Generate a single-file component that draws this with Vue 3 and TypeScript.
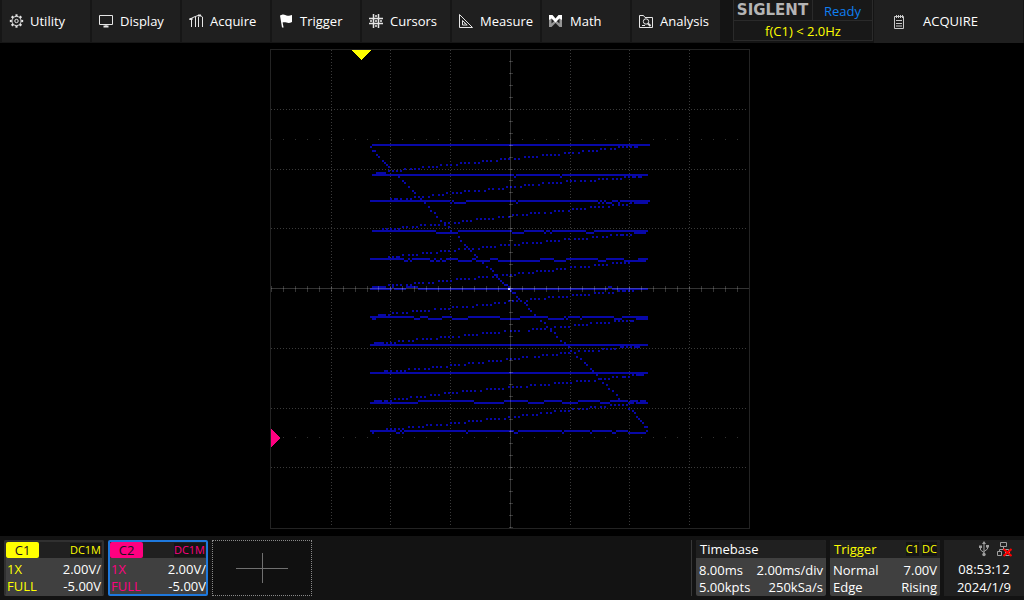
<script setup lang="ts">
interface MenuItem {
  label: string
  icon: string
}
interface Channel {
  name: string
  coupling: string
  probe: string
  bandwidth: string
  scale: string
  offset: string
  tone: string
  active: boolean
}

const menu: MenuItem[] = [
  { label: 'Utility', icon: 'gear' },
  { label: 'Display', icon: 'display' },
  { label: 'Acquire', icon: 'acquire' },
  { label: 'Trigger', icon: 'flag' },
  { label: 'Cursors', icon: 'cursors' },
  { label: 'Measure', icon: 'measure' },
  { label: 'Math', icon: 'math' },
  { label: 'Analysis', icon: 'analysis' },
]

const channels: Channel[] = [
  { name: 'C1', coupling: 'DC1M', probe: '1X', bandwidth: 'FULL', scale: '2.00V/', offset: '-5.00V', tone: 'yellow', active: false },
  { name: 'C2', coupling: 'DC1M', probe: '1X', bandwidth: 'FULL', scale: '2.00V/', offset: '-5.00V', tone: 'pink', active: true },
]

// Graticule: 8 divisions of 5 ticks each way
const tickIndex = Array.from({ length: 40 }, (_, i) => i)
const tickX = tickIndex.map((i) => Math.round(i * 11.95 + 0.9))
const tickY = tickIndex.map((i) => Math.round((i + 1) * 11.95))
const gridX = [5, 10, 15, 25, 30, 35].map((i) => tickX[i])
const gridY = [4, 9, 14, 24, 29, 34].map((i) => tickY[i])

// XY trace samples: one entry per raster row, each listing lit columns or column ranges
const rows: string[] = [
  '1-139', '0 124 126 128 130 132-133', '115 117 120 122', '1-2 106 109 111 113', '97 99 101 104',
  '3 86 88 90 92 94', '4 77 79 81 83', '65 67 69 72 74', '6 56 58 60 63', '7 45 47 49 52 54',
  '8 35 38 40 43', '9 26 29 31 33', '17 20 22 24', '9 11 13 15', '3-7',
  '1-71 73-94 96-138', '14 72 95 127 129 131-132 134-135', '114 116 118 121 123 125', '16 98 100 102 105 107 110 112', '17 86 89 91 93 95',
  '77 79 81 84', '19 68 70 72 75', '59 61 64 66', '21 47 49 52 54 57', '22 38 41 43 45',
  '31 34 36', '22 24 26 29', '10 12-13 15 18 20 25', '0-39 41 48-72 74-113 115 117 121-123 125-139', '27 40 42-47 73 114 116 118-120 124 130 132-138',
  '121 124 126 128', '29 110 112 114 116 119', '101 103 105 107', '30 92 94 96 99', '32 80 82 84 87 90',
  '71 73 76 78', '33 64 66 69', '53 55 57 59 61', '35 46 48 50', '37 39 42 44',
  '25 27 30 32 34 37', '16 18 21 23 39', '6 8 10 12 14', '1-32 40 44-70 77-86 88-89 91-107 112-138', '33-43 71-76 87 90 108-111 132-137',
  '120 123 125-126 128 130', '44 111 113 116 118', '97 99 102 104 106 108', '45 88 90 92 94', '76 78 81 83 85',
  '47 65 67 69 72 74', '48 56 58 60 62', '44 47 49 51 54', '35 37 39 42 50', '26 28 30 33',
  '16 19 21 23 52', '9 11 13-14 53', '0-16 19 21-29 32 35 38-43 51-52 60-63 85-91 98-113 118-126 134-138', '17-18 20 30-31 33-34 36-37 44-50 53-59 64-84 92-97 114-117 127-137', '56 121 123 125 127 129',
  '112 114 116 118', '58 100 102 105 107 109', '60 93 95 97', '61 83 85 87 89 91', '74 76 79 81',
  '62-63 66 68 70 72', '54 56 58 61 63', '43 45 47 49 52 64', '34 36 38 40 65', '22 24 26 29 31 66',
  '9 11 13 15 18 20 67-68', '1-7 11 18-23 69 119-120', '0-10 12-17 24-118 121-138', '70 124 126-127 129 131', '71-72 112 114 116 119 121',
  '101 103 105 107 109', '73 89 91 94 96 98', '74 80 82 84 87', '69 71 73 75 78', '67 77 62 64',
  '78 53 56 58 60', '41 43 46 48 51', '79 32 35 37 39', '80 21 23 25 27 29', '11 13 16 18',
  '82 4-7 9', '0-21 25-28 36-40 49-64 75-88 97 99-104 106-121 126-138', '1-2 22-24 29-35 41-48 65-74 89-96 98 105 122-125 133-138', '85 122 124 126 128 130-131', '87 110 113 115 117 119',
  '102 104 106 108', '88 92 95 97 99', '81 83 85 87 90', '67 70 72 74 79 90', '92 56 58 60 62 64',
  '47 49 51 53', '93 35 37 39 41 44', '23 26 28 30 33', '95 14 16 19 21', '97 2-6 8 10 12',
  '0-138', '99 125-126 128 130 132-134', '116 118 120 122', '100 104 107 109 111 114', '95 97 99 102',
  '86 88 91 93', '103 76 78 82 84', '105 68 70 72 74', '59 61 63 65', '107 49 51 54 56',
  '108 40 42 44 47', '31 33 35 38', '110 19 22 24 27 29', '111 7-8 10 13 15 17', '0-138',
  '113 131 133-136', '121 123 126-127 129', '114-115 117 119', '103 105 107 109 112', '116 92 94 96 98 100',
  '118 80 82 85 87 89', '69 71 73 75 78', '119 58 60 62 64 66', '121 46 48 50 52 55', '37 39 41 43',
  '123 30 32 34', '20 23 25 27', '124 12 14 16 18', '2-5 7-8 10 24-51 67-78 87-95 104-114 120-128 130-133 135-137', '0-23 52-66 79-86 96-103 115-119 129-131 133-138',
  '120 122 124 126 128', '110 112 115 117', '101 104 106 108 129', '92 95 97 99 131', '85 88 90 132',
  '76 78 81 83', '69 72 74 133', '58 60 62 64 67 134', '49 51 53 55 135', '40 42 44 47 136',
  '28 30 33 35 38', '19 21 24 26 137-138', '8 10 12 14 16', '0-12 15 17-47 49-71 74-95 97-109 111-120 123-128 138', '1 13-14 16 48 72-73 96 110 121-122 129-137',
]

const tracePath = rows
  .map((row, y) =>
    row
      .split(' ')
      .map((span) => {
        const [from, to = from] = span.split('-').map(Number)
        const width = to - from + 1
        return `M${from} ${y}h${width}v1h-${width}z`
      })
      .join(''),
  )
  .join('')
</script>

<template>
  <div class="scope">
    <header class="topbar">
      <nav class="menu" aria-label="Main menu">
        <button v-for="item in menu" :key="item.label" type="button" class="menu-item">
          <svg class="icon" viewBox="0 0 16 16" aria-hidden="true">
            <g v-if="item.icon === 'gear'" class="line">
              <circle cx="7.500" cy="8" r="4.600" />
              <circle class="teeth" cx="7.500" cy="8" r="5.700" pathLength="80" />
              <circle cx="7.500" cy="8" r="1.700" />
            </g>
            <g v-else-if="item.icon === 'display'" class="line">
              <path d="M.5 2.500h13v9H.5zM7 11.500v2" />
              <path d="M4.500 13.500h5" class="thick" />
            </g>
            <g v-else-if="item.icon === 'acquire'" class="line">
              <path d="M.5 6.500 2 5.500 5 4l4-1.500h3l1.500 2M2.500 6v8M6.500 4v10M9.500 4v10M13.500 4v10" />
              <path d="M.5 6h3M9 2.500h3" class="thick" />
            </g>
            <path v-else-if="item.icon === 'flag'" class="solid" d="M1 2.500 3 1.800c2.500-.8 3.500 1.200 6 1 1.500-.1 2.500-.6 4-.9V9c-2 1-3.500 1.200-5.500.6C6 9.200 5 9 3.600 9.500l1 5H3z" />
            <path v-else-if="item.icon === 'cursors'" class="line cross" d="M4.500 1v14M9.500 1v14M0 5.500h14M0 10.500h14M7 2v2M7 12v2M1 8h2M11 8h2M6 8h2" />
            <g v-else-if="item.icon === 'measure'" class="line">
              <path d="M.5 1.500v13h13z" />
              <path d="M3.500 7.500V12h4.700zM5.500 10.500h1" />
            </g>
            <g v-else-if="item.icon === 'math'">
              <path class="dim" d="M0 6.500 2.500 5v5.500l4-3.500 4 3.500V5L13 6.500V14h-2.500l-4-4-4 4H0z" />
              <path class="solid" d="M0 2h3.500l3 3.500 3-3.500H13v5l-2.500-1.500-4 4-4-4L0 7z" />
            </g>
            <g v-else class="line">
              <path d="M.5 14.500v-12h4l1.500 2h7.500v10z" />
              <circle cx="7" cy="8.500" r="2.700" />
              <path d="M3 12.500h3" />
              <path d="M9 10.500l2.500 2.500" class="thick" />
            </g>
          </svg>
          <span>{{ item.label }}</span>
        </button>
      </nav>
      <section class="status">
        <strong class="brand">SIGLENT</strong>
        <span class="state">Ready</span>
        <span class="counter">f(C1) &lt; 2.0Hz</span>
      </section>
      <button type="button" class="panel-title">
        <svg class="icon" viewBox="0 0 16 16" aria-hidden="true">
          <path class="line light" d="M3.500 2.500h9v12h-9zM5 6.500h6M5 9.500h6M5 12h6" />
          <path class="line light" d="M5.500 1v3M7.500 1v3M9.500 1v3M11.500 1v3" />
        </svg>
        <span>ACQUIRE</span>
      </button>
    </header>

    <main class="display">
      <svg class="plot" viewBox="0 0 480 480" role="img" aria-label="XY waveform display">
        <path class="frame" d="M.5.5h479v479H.5z" />
        <path v-for="x in gridX" :key="'gx' + x" class="grid" :d="`M${x + 0.5} 1v477`" />
        <path v-for="y in gridY" :key="'gy' + y" class="grid" :d="`M1 ${y + 0.5}h476`" />
        <template v-for="x in tickX" :key="'h' + x">
          <rect class="dot" :x="x" y="90" width="1" height="1" />
          <rect class="dot" :x="x" y="388" width="1" height="1" />
        </template>
        <path class="trace" :d="tracePath" transform="translate(100 95) scale(2)" />
        <g class="axis">
          <rect x="240" y="1" width="1" height="478" />
          <rect x="1" y="239" width="478" height="1" />
          <rect v-for="x in tickX" :key="'ax' + x" :x="x" y="237" width="1" height="6" />
          <rect v-for="y in tickY" :key="'ay' + y" x="239" :y="y" width="4" height="1" />
        </g>
        <rect class="spot" x="238" y="239" width="2" height="2" />
        <path class="trigger-mark" d="M81 1h20L91 11z" />
        <path class="level-mark" d="M1 380v18l9-9z" />
      </svg>
    </main>

    <footer class="bottombar">
      <section v-for="ch in channels" :key="ch.name" class="card channel" :class="[ch.tone, { active: ch.active }]">
        <header class="card-head">
          <button type="button" class="tag">{{ ch.name }}</button>
          <span class="chip">{{ ch.coupling }}</span>
        </header>
        <div class="card-row"><span class="tinted">{{ ch.probe }}</span><span>{{ ch.scale }}</span></div>
        <div class="card-row"><span class="tinted">{{ ch.bandwidth }}</span><span>{{ ch.offset }}</span></div>
      </section>
      <button type="button" class="add" aria-label="Add channel">
        <svg viewBox="0 0 52 30" aria-hidden="true"><path d="M0 15.500h52M26.500 0v30" /></svg>
      </button>
      <div class="info">
        <section class="card timebase">
          <header class="card-head"><span>Timebase</span></header>
          <div class="card-row"><span>8.00ms</span><span>2.00ms/div</span></div>
          <div class="card-row"><span>5.00kpts</span><span>250kSa/s</span></div>
        </section>
        <section class="card trigger yellow">
          <header class="card-head">
            <span class="tinted">Trigger</span>
            <span class="chips"><span class="chip">C1</span><span class="chip">DC</span></span>
          </header>
          <div class="card-row"><span>Normal</span><span>7.00V</span></div>
          <div class="card-row"><span>Edge</span><span>Rising</span></div>
        </section>
        <section class="clock">
          <div class="links">
            <svg class="usb" viewBox="0 0 12 16" aria-hidden="true">
              <path class="line grey" d="M6 2v11M2.500 6v3L6 11.500M9.500 5v3L6 10.500" />
              <path class="fill-grey" d="M6 0l2 3H4zM1 4.500h3v2.500H1zM8 4h3v2.500H8z" />
              <circle class="fill-grey" cx="6" cy="13.500" r="1.700" />
            </svg>
            <svg class="lan" viewBox="0 0 16 16" aria-hidden="true">
              <path class="line grey" d="M4.500 1.500h6v4h-6zM7.500 5.500v3M3.500 10.500v-2h9v2M1.500 10.500h4v4h-4zM9.500 10.500h4v4h-4z" />
              <path class="cross-red" d="M7.500 8l8 7M15.500 8l-8 7" />
            </svg>
          </div>
          <time>08:53:12</time>
          <time>2024/1/9</time>
        </section>
      </div>
    </footer>
  </div>
</template>

<style>
body {
  margin: 0;
  background: #000;
}
</style>

<style scoped>
.scope {
  display: flex;
  flex-direction: column;
  min-height: 100vh;
  background: #000;
  color: #fff;
  font: 13px/17px "Open Sans", "Noto Sans", sans-serif;
}
button {
  margin: 0;
  padding: 0;
  border: 0;
  background: none;
  color: inherit;
  font: inherit;
}
.topbar {
  display: flex;
  height: 43px;
  background: #141414;
}
.menu {
  display: flex;
  flex: 1;
}
.menu-item {
  display: flex;
  flex: 1;
  align-items: center;
  gap: 5px;
  padding-left: 7px;
  border-left: 2px solid #161616;
  border-bottom: 1px solid #161616;
  background: #1f1f1f;
}
.icon {
  flex: none;
  width: 16px;
  height: 16px;
}
.line {
  fill: none;
  stroke: #e6e6e6;
  stroke-width: 1;
}
.teeth {
  stroke-width: 2;
  stroke-dasharray: 5 5;
  stroke-dashoffset: 2.5;
}
.thick {
  stroke-width: 2;
}
.cross {
  stroke-width: 1.5;
}
.line.grey {
  stroke: #a0a0a0;
}
.line.light {
  stroke: #c8c8c8;
}
.solid {
  fill: #fff;
}
.dim {
  fill: #969696;
}
.status {
  display: grid;
  grid-template-columns: 79px 59px;
  grid-template-rows: 20px 20px;
  margin: 0 1px 2px 13px;
  border: 1px solid #2a2a2a;
  border-top: 0;
  background: #181818;
  text-align: center;
}
.brand {
  padding-right: 1px;
  border-right: 1px solid #2a2a2a;
  color: #b4b4b4;
  font: bold 15px/20px "DejaVu Sans", sans-serif;
}
.state {
  color: #0f7ff0;
  line-height: 23px;
}
.counter {
  grid-column: 1 / 3;
  border-top: 1px solid #2a2a2a;
  color: #ff0;
  line-height: 21px;
}
.panel-title {
  display: flex;
  box-sizing: border-box;
  align-items: center;
  gap: 16px;
  width: 150px;
  padding-left: 17px;
  border-right: 1px solid #141414;
  background: #1f1f1f;
}
.display {
  display: flex;
  flex: 1;
  align-items: flex-start;
  justify-content: center;
  padding-top: 6px;
}
.plot {
  width: 480px;
  height: 480px;
  margin-right: 4px;
  shape-rendering: crispEdges;
}
.frame {
  fill: none;
  stroke: #232323;
}
.grid {
  stroke: #3a3a3a;
  stroke-dasharray: 1 2;
}
.dot {
  fill: #333;
}
.trace {
  fill: #0808a8;
}
.axis {
  fill: #fff;
  fill-opacity: 0.2;
}
.spot {
  fill: #c4c4ff;
}
.trigger-mark {
  fill: #ff0;
}
.level-mark {
  fill: #ff0080;
}
.bottombar {
  display: flex;
  gap: 4px;
  height: 56px;
  padding: 4px 0 4px 4px;
  background: #131313;
}
.card {
  box-sizing: border-box;
  border-radius: 2px;
  background: #404040;
  overflow: hidden;
}
.card-head {
  display: flex;
  align-items: center;
  justify-content: space-between;
  height: 18px;
  padding: 0 3px 0 4px;
  background: #202020;
}
.card-row {
  display: flex;
  justify-content: space-between;
  padding: 0 3px;
}
.card-head + .card-row {
  padding-top: 4px;
}
.channel {
  width: 100px;
  border: 2px solid #303030;
  border-bottom-color: #404040;
}
.channel .card-head {
  height: 16px;
  padding: 0 1px 0 0;
}
.channel .card-row {
  padding-left: 1px;
  padding-right: 1px;
}
.channel .card-head + .card-row {
  padding-top: 3px;
}
.channel.active {
  border-color: #1e78dc;
}
.channel.active .card-row {
  padding-right: 0;
}
.tag {
  width: 33px;
  height: 16px;
  border-radius: 2px;
  color: #201020;
  line-height: 16px;
}
.yellow .tag {
  background: #ff0;
}
.pink .tag {
  background: #ff0080;
}
.yellow .chip,
.yellow .tinted {
  color: #ff0;
}
.pink .chip,
.pink .tinted {
  color: #ff0080;
}
.chip {
  background: #141414;
  font-size: 11px;
  line-height: 14px;
}
.chips {
  display: flex;
  gap: 3px;
}
.add {
  display: flex;
  align-items: center;
  justify-content: center;
  box-sizing: border-box;
  width: 100px;
  border: 1px dotted #8a8a8a;
  background: #101010;
}
.add svg {
  width: 52px;
  height: 30px;
}
.add path {
  stroke: #707070;
}
.info {
  display: flex;
  gap: 4px;
  margin-left: auto;
  padding-left: 4px;
  border-left: 1px solid #383838;
}
.timebase {
  width: 130px;
}
.trigger {
  width: 110px;
}
.clock {
  width: 80px;
  background: #202020;
  text-align: center;
}
.clock time {
  display: block;
  line-height: 18px;
}
.links {
  display: flex;
  justify-content: flex-end;
  gap: 6px;
  height: 20px;
  padding-right: 12px;
}
.usb {
  width: 12px;
  height: 16px;
  margin-top: 1px;
}
.lan {
  width: 16px;
  height: 16px;
  margin-top: 1px;
}
.fill-grey {
  fill: #a0a0a0;
}
.cross-red {
  stroke: #f00;
  stroke-width: 2;
}
</style>
